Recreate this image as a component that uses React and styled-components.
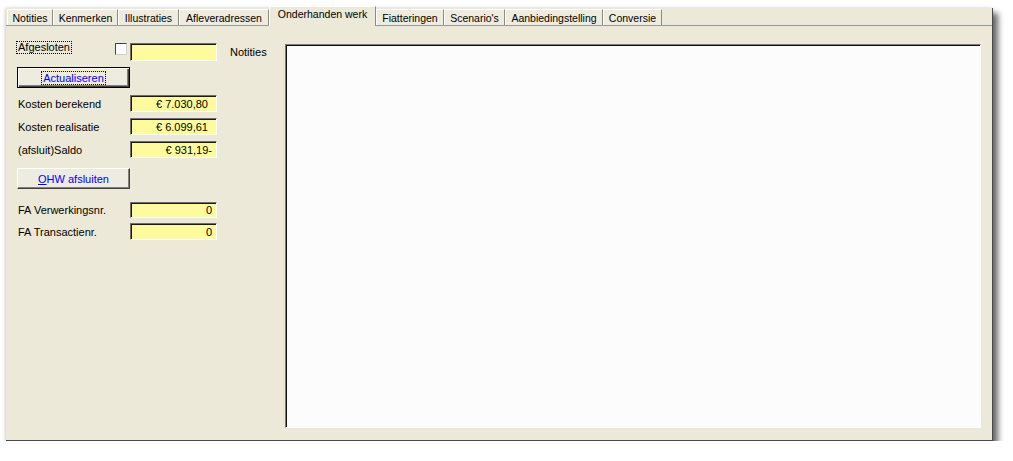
import styled, { createGlobalStyle } from "styled-components";

const GlobalStyle = createGlobalStyle`
  html, body {
    margin: 0;
    padding: 0;
    background: #ffffff;
  }
  body {
    font-family: "Liberation Sans", Arial, sans-serif;
    font-size: 11px;
    color: #000;
  }
`;

const tabs = [
  { label: "Notities", w: 46 },
  { label: "Kenmerken", w: 65 },
  { label: "Illustraties", w: 61 },
  { label: "Afleveradressen", w: 90 },
  { label: "Onderhanden werk", w: 107, active: true },
  { label: "Fiatteringen", w: 68 },
  { label: "Scenario's", w: 61 },
  { label: "Aanbiedingstelling", w: 98 },
  { label: "Conversie", w: 59 },
];

function App() {
  return (
    <Page>
      <GlobalStyle />
      <Window>
        <TabStrip>
          {tabs.map((t) => (
            <Tab key={t.label} $w={t.w} $active={t.active}>
              {t.label}
            </Tab>
          ))}
        </TabStrip>
        <Panel>
          <LeftCol>
            <FieldRow $h={18}>
              <CheckCell>
                <FocusLabel>Afgesloten</FocusLabel>
                <Check />
              </CheckCell>
              <Field />
            </FieldRow>
            <Button $default $mt={6}>
              <FocusText>Actualiseren</FocusText>
            </Button>
            <FieldRow $mt={7}>
              <Label>Kosten berekend</Label>
              <Field $pr={8}>€ 7.030,80</Field>
            </FieldRow>
            <FieldRow $mt={6}>
              <Label>Kosten realisatie</Label>
              <Field $pr={8}>€ 6.099,61</Field>
            </FieldRow>
            <FieldRow $mt={6}>
              <Label>(afsluit)Saldo</Label>
              <Field>€ 931,19-</Field>
            </FieldRow>
            <Button $mt={10}>
              <u>O</u>HW afsluiten
            </Button>
            <FieldRow $mt={13} $h={16}>
              <Label>FA Verwerkingsnr.</Label>
              <Field>0</Field>
            </FieldRow>
            <FieldRow $mt={5}>
              <Label>FA Transactienr.</Label>
              <Field>0</Field>
            </FieldRow>
          </LeftCol>
          <NotesLabel>Notities</NotesLabel>
          <Notes />
        </Panel>
      </Window>
    </Page>
  );
}

const Page = styled.div`
  padding: 8px 0 0 6px;
`;

const Window = styled.div`
  box-sizing: border-box;
  width: 987px;
  height: 433px;
  background: #ece9d8;
  border-right: 1px solid #4a4a4a;
  border-bottom: 1px solid #4a4a4a;
  box-shadow: 5px 5px 6px rgba(0, 0, 0, 0.6), -1px 0 3px rgba(0, 0, 0, 0.18);
  display: flex;
  flex-direction: column;
`;

const TabStrip = styled.div`
  height: 17px;
  flex: none;
  display: flex;
  align-items: flex-end;
  padding-left: 1px;
`;

const Tab = styled.div`
  box-sizing: border-box;
  width: ${(p) => p.$w}px;
  height: ${(p) => (p.$active ? 20 : 16)}px;
  margin-bottom: ${(p) => (p.$active ? -1 : 0)}px;
  position: relative;
  z-index: ${(p) => (p.$active ? 2 : 1)};
  background: ${(p) => (p.$active ? "#ece9d8" : "#efecdf")};
  border-top: 1px solid #ffffff;
  border-left: 1px solid #ffffff;
  border-right: 1px solid #8e8c80;
  font-size: 10.5px;
  line-height: 13px;
  padding-top: ${(p) => (p.$active ? 1 : 2)}px;
  text-align: center;
  white-space: nowrap;
`;

const Panel = styled.div`
  flex: 1;
  display: flex;
  align-items: flex-start;
  border-top: 1px solid #919b9c;
  padding: 17px 11px 12px 11px;
  min-height: 0;
`;

const LeftCol = styled.div`
  width: 200px;
  flex: none;
  display: flex;
  flex-direction: column;
`;

const FieldRow = styled.div`
  display: grid;
  grid-template-columns: 113px 87px;
  height: ${(p) => p.$h || 17}px;
  margin-top: ${(p) => p.$mt || 0}px;
  align-items: center;
`;

const Label = styled.div`
  padding-left: 1px;
  white-space: nowrap;
`;

const CheckCell = styled.div`
  display: flex;
  justify-content: space-between;
  align-items: flex-start;
  align-self: start;
  height: 100%;
  padding-right: 3px;
`;

const FocusLabel = styled.div`
  margin-top: -2px;
  margin-left: -1px;
  padding: 0 1px;
  border: 1px dotted #000;
  line-height: 11px;
`;

const Check = styled.div`
  box-sizing: border-box;
  width: 12px;
  height: 12px;
  background: #fff;
  border-top: 1px solid #404040;
  border-left: 1px solid #404040;
  border-right: 1px solid #d4d0c8;
  border-bottom: 1px solid #d4d0c8;
`;

const Field = styled.div`
  box-sizing: border-box;
  height: 100%;
  background: #fdfb9e;
  border-top: 1px solid #716f64;
  border-left: 1px solid #716f64;
  border-right: 1px solid #fff;
  border-bottom: 1px solid #fff;
  box-shadow: inset 1px 1px 0 #1a1a1a;
  display: flex;
  align-items: center;
  justify-content: flex-end;
  padding-right: ${(p) => p.$pr || 4}px;
  white-space: nowrap;
`;

const Button = styled.div`
  box-sizing: border-box;
  width: 113px;
  height: 21px;
  margin-top: ${(p) => p.$mt || 0}px;
  background: #eeebe0;
  color: #0000ff;
  display: flex;
  align-items: center;
  justify-content: center;
  border: 1px solid ${(p) => (p.$default ? "#000" : "transparent")};
  border-top-color: ${(p) => (p.$default ? "#000" : "#fff")};
  border-left-color: ${(p) => (p.$default ? "#000" : "#fff")};
  border-right-color: ${(p) => (p.$default ? "#000" : "#404040")};
  border-bottom-color: ${(p) => (p.$default ? "#000" : "#404040")};
  box-shadow: ${(p) =>
    p.$default
      ? "inset 1px 1px 0 #fff, inset -1px -1px 0 #404040, inset -2px -2px 0 #808080"
      : "inset -1px -1px 0 #808080"};
`;

const FocusText = styled.span`
  padding: 0 1px;
  line-height: 12px;
  border: 1px dotted #000;
  background: linear-gradient(#eeebe0, #eeebe0) padding-box,
    linear-gradient(#f2ee60, #f2ee60) border-box;
`;

const NotesLabel = styled.div`
  width: 55px;
  flex: none;
  margin-left: 13px;
  margin-top: 3px;
  line-height: 13px;
`;

const Notes = styled.div`
  box-sizing: border-box;
  flex: 1;
  align-self: stretch;
  margin-top: 1px;
  background: #fcfcfc;
  border-top: 1px solid #7a7a7a;
  border-left: 1px solid #7a7a7a;
  border-right: 1px solid #fff;
  border-bottom: 1px solid #fff;
  box-shadow: inset 1px 1px 0 #111;
`;

export default App;
